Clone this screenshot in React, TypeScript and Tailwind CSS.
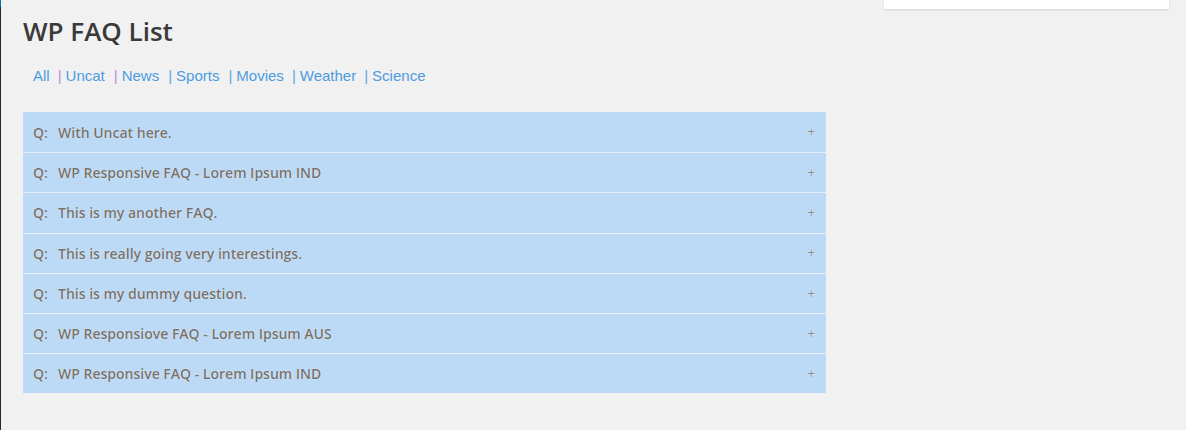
const cats = ['All', 'Uncat', 'News', 'Sports', 'Movies', 'Weather', 'Science']

const faqs = [
  'With Uncat here.',
  'WP Responsive FAQ - Lorem Ipsum IND',
  'This is my another FAQ.',
  'This is really going very interestings.',
  'This is my dummy question.',
  'WP Responsiove FAQ - Lorem Ipsum AUS',
  'WP Responsive FAQ - Lorem Ipsum IND',
]

export default function App() {
  return (
    <div className="flex h-[430px] w-[1186px] overflow-hidden bg-[#f1f1f1]">
      <div className="flex w-px flex-col bg-[#23282d]">
        <div className="h-[7px] bg-[#0073aa]" />
      </div>
      <main className="relative flex-1 pl-[22px]">
        <div className="absolute right-[17px] top-0 h-[9px] w-[285px] bg-white shadow-[0_1px_2px_rgba(0,0,0,.12)]" />
        <h1 className="pt-[14px] font-['Open_Sans',sans-serif] text-[26px] font-semibold leading-[34px] text-[#3a3a3a]">WP FAQ List</h1>
        <nav className="mt-[19px] flex pl-[10px] font-['Liberation_Sans',Arial,sans-serif] text-[15px] leading-[18px] text-[#4d9be0]">
          {cats.map((c, i) => (
            <span key={c} className="flex">
              {i === 1 && <span className="ml-[8px] mr-[4px] text-[#b58fd8]">|</span>}
              {i === 2 && <span className="ml-[9px] mr-[4px] text-[#b58fd8]">|</span>}
              {(i === 3 || i === 4) && <span className="ml-[9px] mr-[4px] text-[#5aa6e6]">|</span>}
              {i > 4 && <span className="ml-[8px] mr-[4px] text-[#5aa6e6]">|</span>}
              <span>{c}</span>
            </span>
          ))}
        </nav>
        <div className="mt-[27px] w-[803px] font-['Open_Sans',sans-serif]">
          {faqs.map((q, i) => (
            <div
              key={i}
              className={'flex h-[40.2px] items-center justify-between bg-[#bcdaf6] pl-[10px] pr-[10px] text-[14px] font-semibold text-[#75726d] [text-shadow:0_0_1px_#fff] ' + (i > 0 ? 'border-t border-[#e4eef8]' : '')}
            >
              <span className="flex">
                <span className="w-[25px]">Q:</span>
                <span>{q}</span>
              </span>
              <span className="mr-px text-[13px] font-normal text-[#8a8a8a]">+</span>
            </div>
          ))}
        </div>
      </main>
    </div>
  )
}
